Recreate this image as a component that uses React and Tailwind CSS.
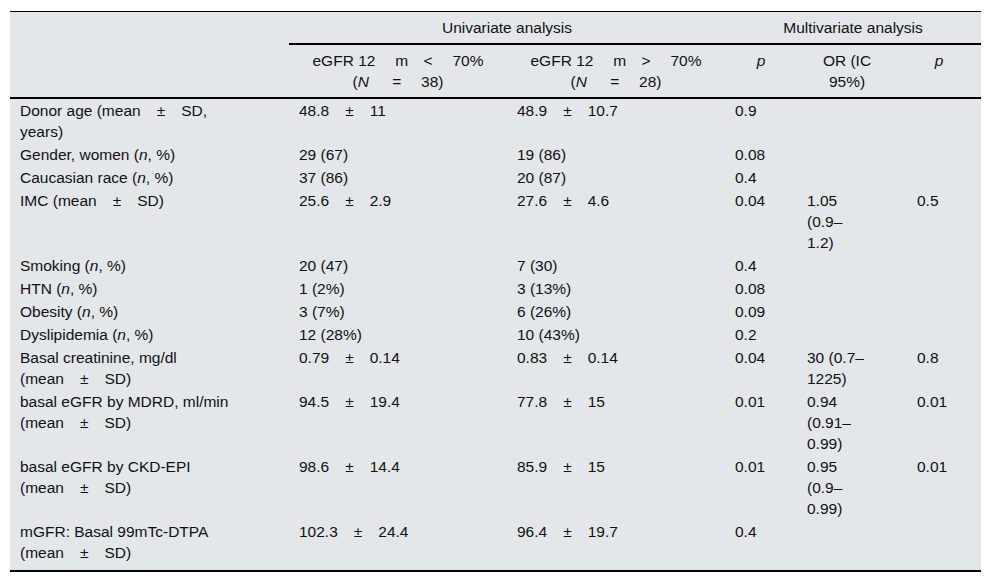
import React from "react";

const Pm = () => <span className="mx-[16px]">±</span>;
const N = () => <i>n</i>;

const rows = [
  {
    label: (
      <>
        Donor age (mean
        <Pm />
        SD,
        <br />
        years)
      </>
    ),
    a: (
      <>
        48.8
        <Pm />
        11
      </>
    ),
    b: (
      <>
        48.9
        <Pm />
        10.7
      </>
    ),
    p: "0.9",
  },
  {
    label: (
      <>
        Gender, women (<N />, %)
      </>
    ),
    a: "29 (67)",
    b: "19 (86)",
    p: "0.08",
  },
  {
    label: (
      <>
        Caucasian race (<N />, %)
      </>
    ),
    a: "37 (86)",
    b: "20 (87)",
    p: "0.4",
  },
  {
    label: (
      <>
        IMC (mean
        <Pm />
        SD)
      </>
    ),
    a: (
      <>
        25.6
        <Pm />
        2.9
      </>
    ),
    b: (
      <>
        27.6
        <Pm />
        4.6
      </>
    ),
    p: "0.04",
    or: (
      <>
        1.05
        <br />
        (0.9–
        <br />
        1.2)
      </>
    ),
    p2: "0.5",
  },
  {
    label: (
      <>
        Smoking (<N />, %)
      </>
    ),
    a: "20 (47)",
    b: "7 (30)",
    p: "0.4",
  },
  {
    label: (
      <>
        HTN (<N />, %)
      </>
    ),
    a: "1 (2%)",
    b: "3 (13%)",
    p: "0.08",
  },
  {
    label: (
      <>
        Obesity (<N />, %)
      </>
    ),
    a: "3 (7%)",
    b: "6 (26%)",
    p: "0.09",
  },
  {
    label: (
      <>
        Dyslipidemia (<N />, %)
      </>
    ),
    a: "12 (28%)",
    b: "10 (43%)",
    p: "0.2",
  },
  {
    label: (
      <>
        Basal creatinine, mg/dl
        <br />
        (mean
        <Pm />
        SD)
      </>
    ),
    a: (
      <>
        0.79
        <Pm />
        0.14
      </>
    ),
    b: (
      <>
        0.83
        <Pm />
        0.14
      </>
    ),
    p: "0.04",
    or: (
      <>
        30 (0.7–
        <br />
        1225)
      </>
    ),
    p2: "0.8",
  },
  {
    label: (
      <>
        basal eGFR by MDRD, ml/min
        <br />
        (mean
        <Pm />
        SD)
      </>
    ),
    a: (
      <>
        94.5
        <Pm />
        19.4
      </>
    ),
    b: (
      <>
        77.8
        <Pm />
        15
      </>
    ),
    p: "0.01",
    or: (
      <>
        0.94
        <br />
        (0.91–
        <br />
        0.99)
      </>
    ),
    p2: "0.01",
  },
  {
    label: (
      <>
        basal eGFR by CKD-EPI
        <br />
        (mean
        <Pm />
        SD)
      </>
    ),
    a: (
      <>
        98.6
        <Pm />
        14.4
      </>
    ),
    b: (
      <>
        85.9
        <Pm />
        15
      </>
    ),
    p: "0.01",
    or: (
      <>
        0.95
        <br />
        (0.9–
        <br />
        0.99)
      </>
    ),
    p2: "0.01",
  },
  {
    label: (
      <>
        mGFR: Basal 99mTc-DTPA
        <br />
        (mean
        <Pm />
        SD)
      </>
    ),
    a: (
      <>
        102.3
        <Pm />
        24.4
      </>
    ),
    b: (
      <>
        96.4
        <Pm />
        19.7
      </>
    ),
    p: "0.4",
    last: true,
  },
];

function App() {
  return (
    <div className="min-h-screen bg-white pt-[11px] pl-[10px] font-['Liberation_Sans',Arial,sans-serif] text-[15.5px] leading-[21px] text-[#111]">
      <table className="w-[971px] table-fixed border-separate border-spacing-0 border-t border-b-2 border-black bg-[#e3e7ea]">
        <colgroup>
          <col className="w-[279px]" />
          <col className="w-[218px]" />
          <col className="w-[218px]" />
          <col className="w-[72px]" />
          <col className="w-[110px]" />
          <col className="w-[74px]" />
        </colgroup>
        <thead>
          <tr>
            <th rowSpan={2} className="border-b-2 border-black"></th>
            <th colSpan={2} className="border-b-2 border-black px-[10px] py-[5px] text-center font-normal">
              Univariate analysis
            </th>
            <th colSpan={3} className="border-b-2 border-black px-[10px] py-[5px] text-center font-normal">
              Multivariate analysis
            </th>
          </tr>
          <tr>
            <th className="border-b-2 border-black px-[10px] py-[5px] text-center align-top font-normal whitespace-nowrap">
              eGFR 12{"\u00a0\u2003"}m{"\u2003"}&lt;{"\u00a0\u2003"}70%
              <br />
              (<i>N</i>{"\u2003\u2002"}={"\u00a0\u2003"}38)
            </th>
            <th className="border-b-2 border-black px-[10px] py-[5px] text-center align-top font-normal whitespace-nowrap">
              eGFR 12{"\u00a0\u2003"}m{"\u2003"}&gt;{"\u00a0\u2003"}70%
              <br />
              (<i>N</i>{"\u2003\u2002"}={"\u00a0\u2003"}28)
            </th>
            <th className="border-b-2 border-black px-[10px] py-[5px] text-center align-top font-normal">
              <i>p</i>
            </th>
            <th className="border-b-2 border-black pl-[10px] pr-[20px] py-[5px] text-center align-top font-normal whitespace-nowrap">
              OR (IC
              <br />
              95%)
            </th>
            <th className="border-b-2 border-black pl-[10px] pr-[20px] py-[5px] text-center align-top font-normal">
              <i>p</i>
            </th>
          </tr>
        </thead>
        <tbody>
          {rows.map((r, i) => {
            const cell = `px-[10px] align-top whitespace-nowrap ${r.last ? "pt-px pb-[7px]" : "py-px"}`;
            return (
              <tr key={i}>
                <td className={cell}>{r.label}</td>
                <td className={cell}>{r.a}</td>
                <td className={cell}>{r.b}</td>
                <td className={cell}>{r.p}</td>
                <td className={cell}>{r.or}</td>
                <td className={cell}>{r.p2}</td>
              </tr>
            );
          })}
        </tbody>
      </table>
    </div>
  );
}

export default App;
